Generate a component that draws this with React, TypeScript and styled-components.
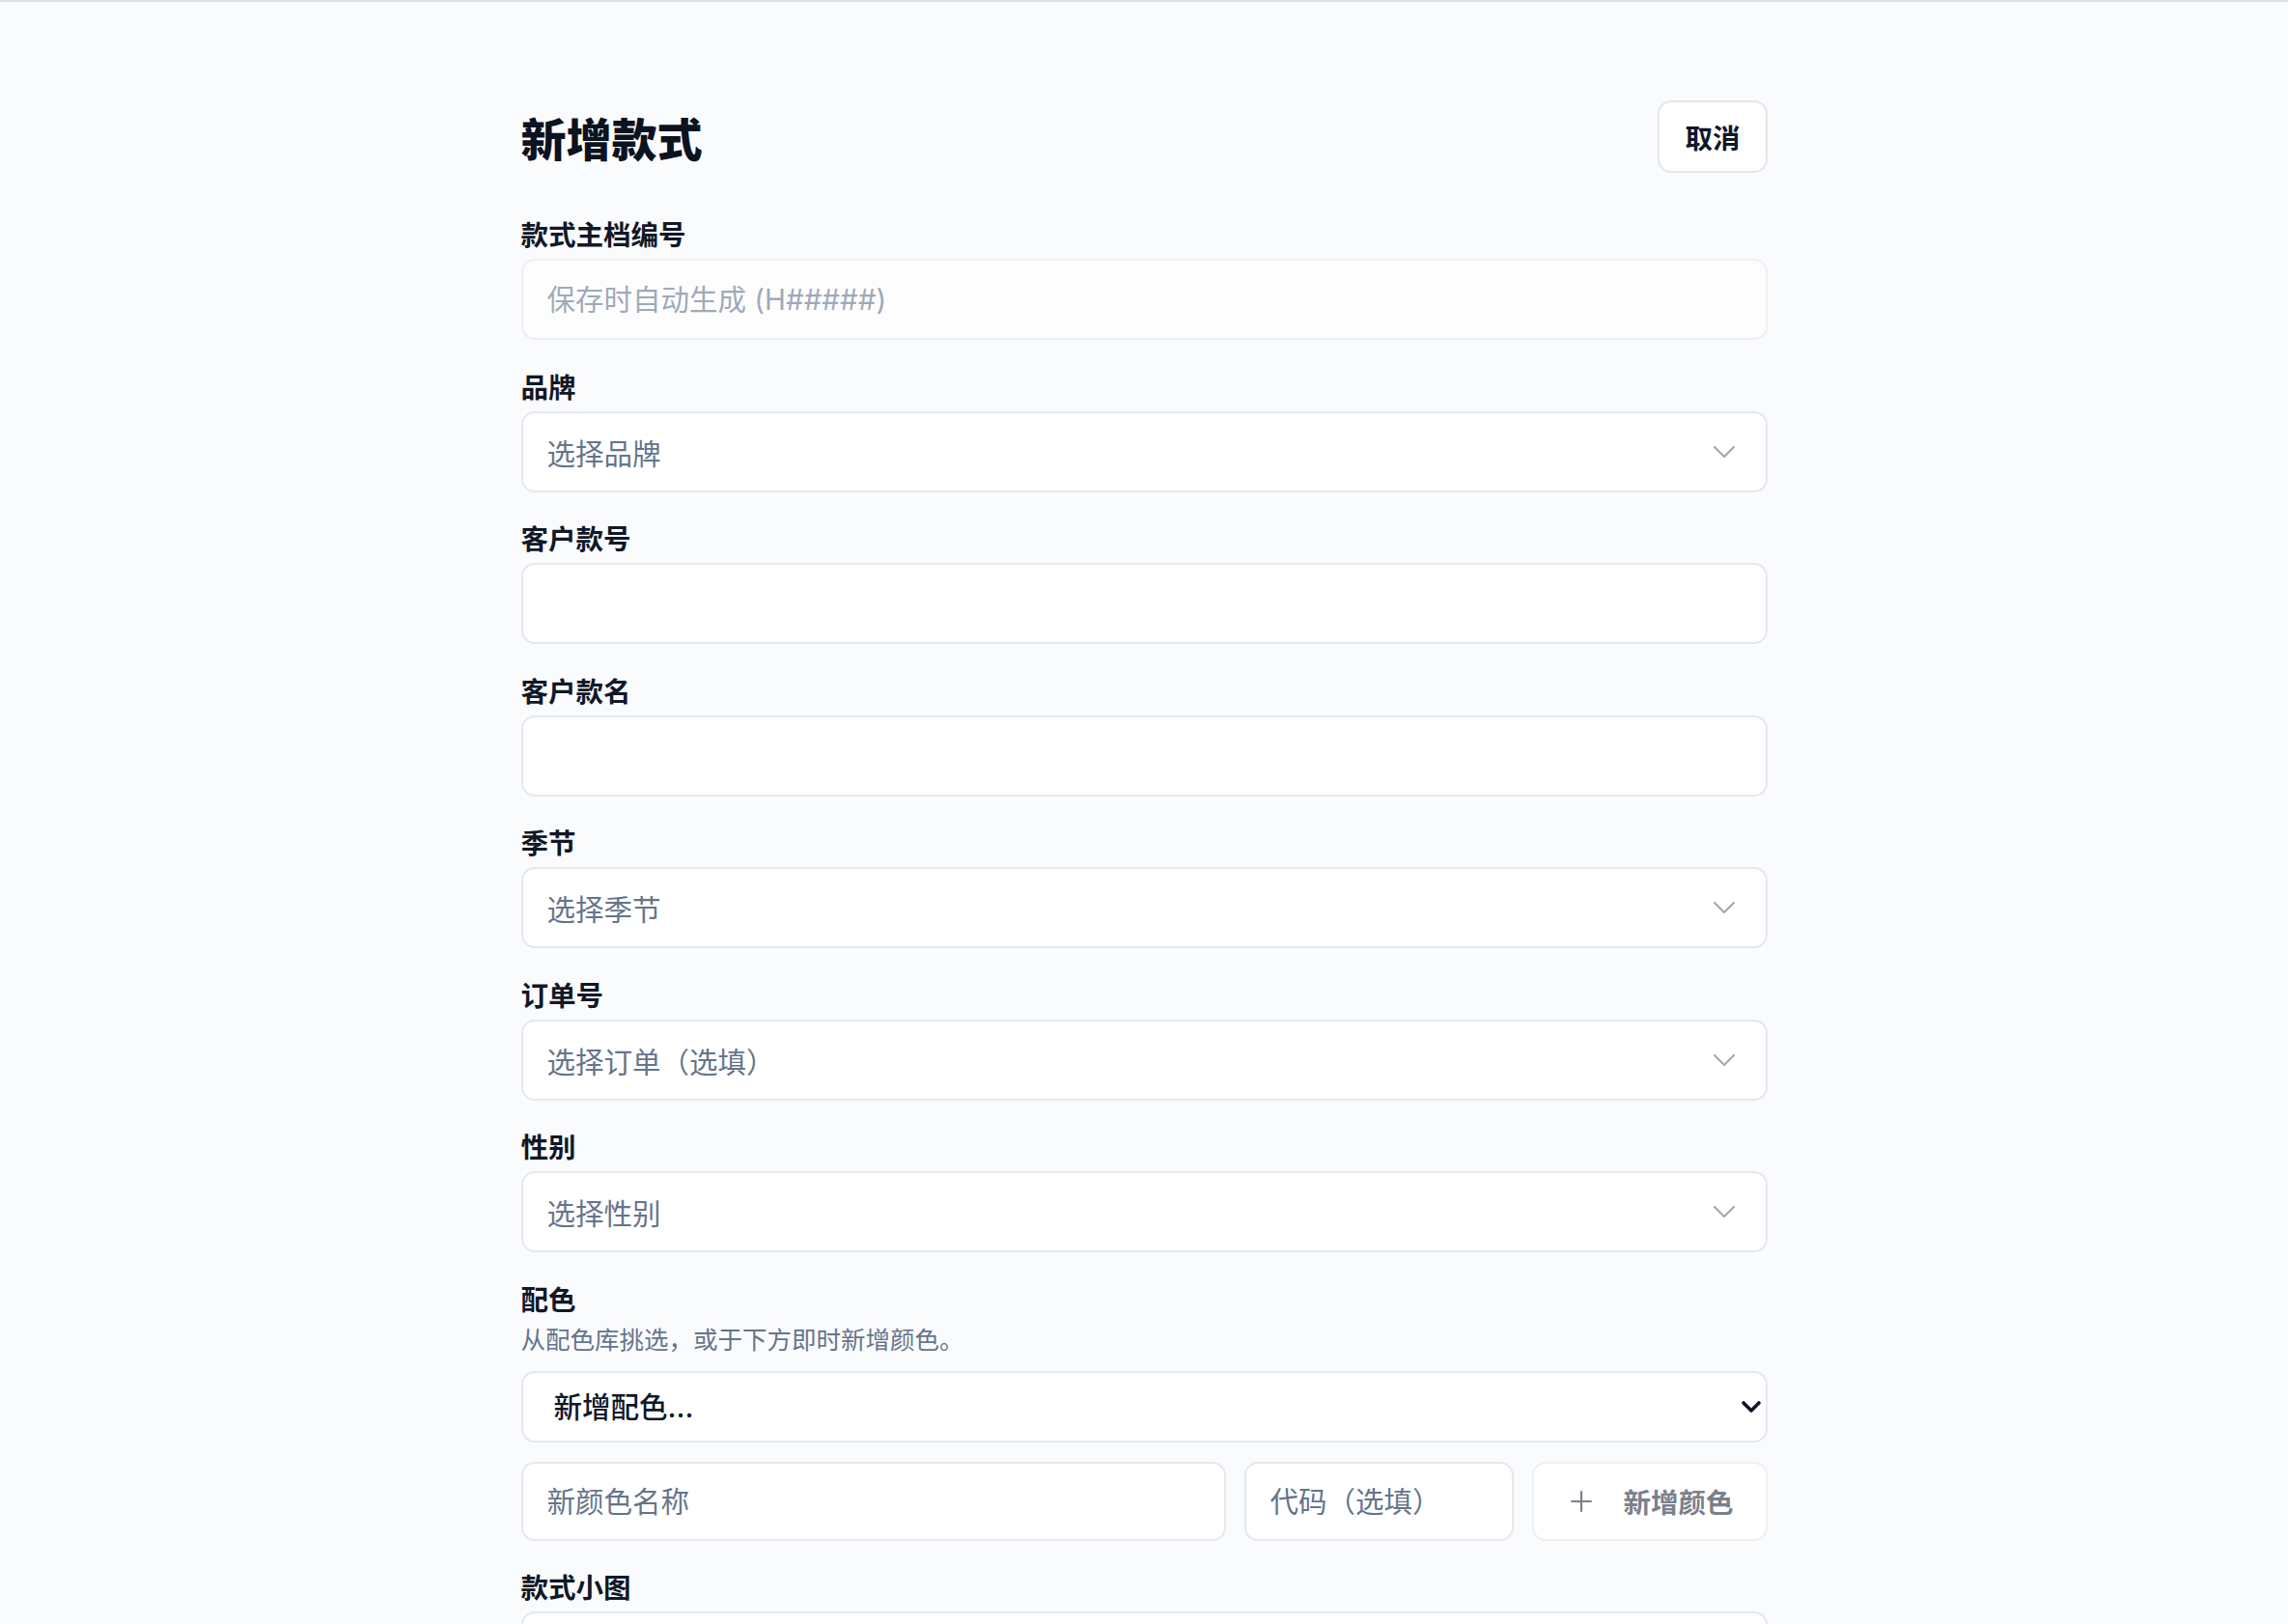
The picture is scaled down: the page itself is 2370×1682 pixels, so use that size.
import React from "react";
import styled, { createGlobalStyle } from "styled-components";
import { Plus } from "lucide-react";

const GlobalStyle = createGlobalStyle`
  html, body {
    margin: 0;
    padding: 0;
    overflow: hidden;
    background: #fafbfd;
  }
  body {
    font-family: Inter, "Noto Sans CJK SC", sans-serif;
    -webkit-font-smoothing: antialiased;
  }
  * { box-sizing: border-box; }
`;

const Page = styled.div`
  border-top: 2px solid #dbe2e7;
  min-height: 1682px;
  padding-top: 102px;
`;

const Container = styled.div`
  width: 1291px;
  margin: 0 auto;
  display: flex;
  flex-direction: column;
`;

const Header = styled.div`
  display: flex;
  justify-content: space-between;
  align-items: center;
  margin-bottom: 46px;
`;

const Title = styled.h1`
  margin: 0;
  padding-top: 6px;
  font-size: 47px;
  line-height: 56px;
  font-weight: 900;
  color: #0b1220;
`;

const OutlineButton = styled.button`
  height: 75px;
  padding: 0 26px;
  border: 2px solid #e3e7ec;
  border-radius: 14px;
  background: #fff;
  font-family: inherit;
  font-size: 28.5px;
  font-weight: 700;
  color: #0f172a;
`;

const Form = styled.div`
  display: flex;
  flex-direction: column;
  gap: 30.5px;
`;

const Field = styled.div<{ $tight?: boolean }>`
  display: flex;
  flex-direction: column;
  gap: ${(p) => (p.$tight ? "0" : "5px")};
`;

const Label = styled.label`
  font-size: 28.5px;
  line-height: 38px;
  font-weight: 700;
  color: #111827;
`;

const TextInput = styled.input<{ $h?: number }>`
  width: 100%;
  height: ${(p) => p.$h ?? 84}px;
  border: 2px solid #e4e8ee;
  border-radius: 14px;
  background: #fff;
  padding: 0 25px;
  font-family: inherit;
  font-size: 29.5px;
  color: #0f172a;
  outline: none;
  &::placeholder {
    color: #64748b;
  }
  &:disabled {
    opacity: 0.6;
  }
`;

const SelectTrigger = styled.button`
  width: 100%;
  height: 84px;
  display: flex;
  align-items: center;
  justify-content: space-between;
  padding: 0 32px 0 25px;
  border: 2px solid #e4e8ee;
  border-radius: 14px;
  background: #fff;
  font-family: inherit;
  font-size: 29.5px;
  color: #64748b;
  text-align: left;
`;

const Helper = styled.p`
  margin: 4px 0 0;
  font-size: 25.5px;
  line-height: 36px;
  color: #64748b;
`;

const NativeSelectWrap = styled.div`
  position: relative;
  margin-top: 14px;
`;

const NativeSelect = styled.select`
  appearance: none;
  -webkit-appearance: none;
  width: 100%;
  height: 74px;
  border: 2px solid #e4e8ee;
  border-radius: 14px;
  background: #fff;
  padding: 0 60px 0 32px;
  font-family: inherit;
  font-size: 29.5px;
  font-weight: 500;
  color: #0f172a;
  outline: none;
`;

const NativeArrow = styled.svg`
  position: absolute;
  right: 6px;
  top: 50%;
  transform: translateY(-50%);
  pointer-events: none;
`;

const ColorRow = styled.div`
  margin-top: 20px;
  display: grid;
  grid-template-columns: 1fr 279px 244px;
  gap: 19px;
`;

const AddColorButton = styled.button`
  height: 82px;
  display: flex;
  align-items: center;
  justify-content: center;
  gap: 26px;
  border: 2px solid #edf0f3;
  border-radius: 14px;
  background: #fff;
  font-family: inherit;
  font-size: 28.5px;
  font-weight: 600;
  color: #7a808b;
`;

const UploadBox = styled.div`
  height: 240px;
  border: 2px solid #e4e8ee;
  border-radius: 14px;
  background: #fff;
`;

const Chevron = () => (
  <svg width="22" height="12" viewBox="0 0 22 12" fill="none">
    <polyline
      points="1,1 11,11 21,1"
      stroke="#a3a9b3"
      strokeWidth="2.2"
      strokeLinecap="round"
      strokeLinejoin="round"
    />
  </svg>
);

const SelectField = ({ label, placeholder }: { label: string; placeholder: string }) => (
  <Field>
    <Label>{label}</Label>
    <SelectTrigger type="button">
      <span>{placeholder}</span>
      <Chevron />
    </SelectTrigger>
  </Field>
);

export default function App() {
  return (
    <>
      <GlobalStyle />
      <Page>
        <Container>
          <Header>
            <Title>新增款式</Title>
            <OutlineButton type="button">取消</OutlineButton>
          </Header>
          <Form>
            <Field>
              <Label>款式主档编号</Label>
              <TextInput disabled placeholder="保存时自动生成 (H#####)" />
            </Field>
            <SelectField label="品牌" placeholder="选择品牌" />
            <Field>
              <Label>客户款号</Label>
              <TextInput />
            </Field>
            <Field>
              <Label>客户款名</Label>
              <TextInput />
            </Field>
            <SelectField label="季节" placeholder="选择季节" />
            <SelectField label="订单号" placeholder="选择订单（选填）" />
            <SelectField label="性别" placeholder="选择性别" />
            <Field $tight>
              <Label>配色</Label>
              <Helper>从配色库挑选，或于下方即时新增颜色。</Helper>
              <NativeSelectWrap>
                <NativeSelect defaultValue="new">
                  <option value="new">新增配色...</option>
                </NativeSelect>
                <NativeArrow width="22" height="14" viewBox="0 0 22 14" fill="none">
                  <polyline
                    points="3,3 11,11 19,3"
                    stroke="#0b1220"
                    strokeWidth="3.6"
                    strokeLinecap="round"
                    strokeLinejoin="round"
                  />
                </NativeArrow>
              </NativeSelectWrap>
              <ColorRow>
                <TextInput $h={82} placeholder="新颜色名称" />
                <TextInput $h={82} placeholder="代码（选填）" />
                <AddColorButton type="button">
                  <Plus size={34} strokeWidth={1.5} />
                  <span>新增颜色</span>
                </AddColorButton>
              </ColorRow>
            </Field>
            <Field>
              <Label>款式小图</Label>
              <UploadBox />
            </Field>
          </Form>
        </Container>
      </Page>
    </>
  );
}
